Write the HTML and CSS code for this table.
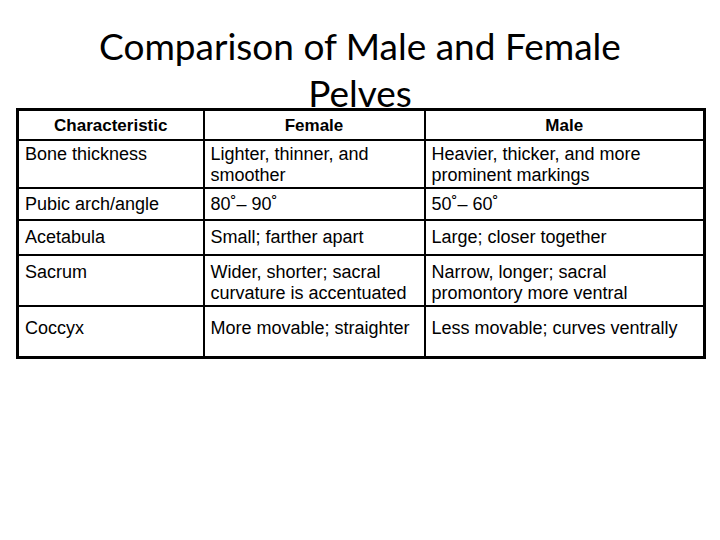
FILE: index.html
```html
<!DOCTYPE html>
<html>
<head>
<meta charset="utf-8">
<link rel="stylesheet" href="styles.css">
</head>
<body>
<div class="slide">
  <h1 class="title">Comparison of Male and Female Pelves</h1>
  <table class="grid">
    <colgroup>
      <col class="c1"><col class="c2"><col class="c3">
    </colgroup>
    <thead>
      <tr class="head"><th>Characteristic</th><th>Female</th><th>Male</th></tr>
    </thead>
    <tbody>
      <tr class="r1"><td>Bone thickness</td><td>Lighter, thinner, and smoother</td><td>Heavier, thicker, and more prominent markings</td></tr>
      <tr class="r2"><td>Pubic arch/angle</td><td>80˚– 90˚</td><td>50˚– 60˚</td></tr>
      <tr class="r3"><td>Acetabula</td><td>Small; farther apart</td><td>Large; closer together</td></tr>
      <tr class="r4"><td>Sacrum</td><td>Wider, shorter; sacral curvature is accentuated</td><td>Narrow, longer; sacral promontory more ventral</td></tr>
      <tr class="r5"><td>Coccyx</td><td>More movable; straighter</td><td>Less movable; curves ventrally</td></tr>
    </tbody>
  </table>
</div>
</body>
</html>
```
FILE: styles.css
```css
html, body {
  margin: 0;
  padding: 0;
  background: #ffffff;
}
.slide {
  width: 720px;
  height: 540px;
  padding-top: 22px;
  box-sizing: border-box;
}
.title {
  margin: 0 auto;
  width: 600px;
  height: 86px;
  font-family: "Lato", "Open Sans", sans-serif;
  font-weight: normal;
  font-size: 37px;
  line-height: 47px;
  text-align: center;
  color: #000;
}
.grid {
  margin-left: 16px;
  width: 687px;
  border-collapse: collapse;
  table-layout: fixed;
  font-family: "Liberation Sans", Arial, sans-serif;
  font-size: 18px;
  line-height: 21px;
  color: #000;
  border: 3px solid #000;
}
.c1 { width: 186px; }
.c2 { width: 221px; }
.c3 { width: 280px; }
.grid th, .grid td {
  border: 2px solid #000;
  padding: 3px 4px 0 6px;
  text-align: left;
  vertical-align: top;
}
.grid th {
  font-weight: bold;
  font-size: 17px;
  text-align: center;
  vertical-align: middle;
  padding: 1px 0 0 0;
}
.head { height: 30px; }
.r1 { height: 48px; }
.r2 { height: 32px; }
.r3 { height: 35px; }
.r4 { height: 51px; }
.r5 { height: 52px; }
.r2 td { padding-top: 5px; }
.r3 td { padding-top: 6px; }
.r4 td { padding-top: 6px; }
.r5 td { padding-top: 11px; }
```
